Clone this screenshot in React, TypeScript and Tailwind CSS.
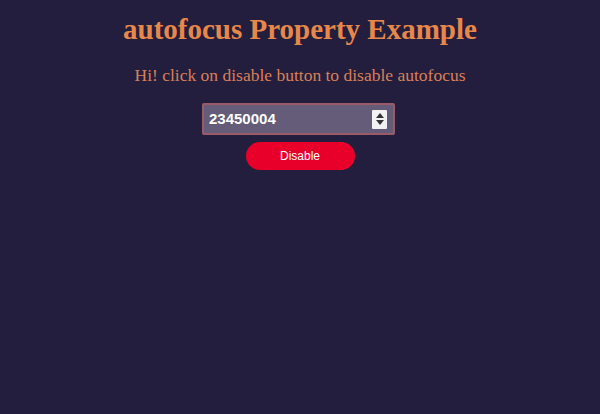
import React from "react";

export default function App() {
  return (
    <div className="w-[600px] h-[414px] bg-[#231e3d] flex flex-col items-center">
      <h1 className="mt-[13px] text-[29px] leading-[33px] font-bold text-[#e8874a] font-['Liberation_Serif',serif]">
        autofocus Property Example
      </h1>
      <p className="mt-[19px] text-[17.5px] leading-[20px] text-[#d98058] font-['Liberation_Serif',serif]">
        Hi! click on disable button to disable autofocus
      </p>
      <div className="mt-[18px] mr-[3px] w-[193px] h-[32px] bg-[#645c78] border-2 border-[#9a5a6a] rounded-[2px] flex items-center pl-[5px] pr-[6px]">
        <span className="flex-1 text-white font-bold text-[15px] font-['Liberation_Sans',sans-serif]">23450004</span>
        <div className="w-[15px] h-[19px] bg-[#f2f2f2] rounded-[1px] flex flex-col items-center justify-center gap-[2px]">
          <svg width="8" height="5" viewBox="0 0 8 5"><path d="M4 0 L8 5 L0 5 Z" fill="#333" /></svg>
          <svg width="8" height="5" viewBox="0 0 8 5"><path d="M0 0 L8 0 L4 5 Z" fill="#333" /></svg>
        </div>
      </div>
      <button className="mt-[7px] w-[109px] h-[28px] rounded-full bg-[#e8002a] text-white text-[12px] font-['Liberation_Sans',sans-serif]">
        Disable
      </button>
    </div>
  );
}
